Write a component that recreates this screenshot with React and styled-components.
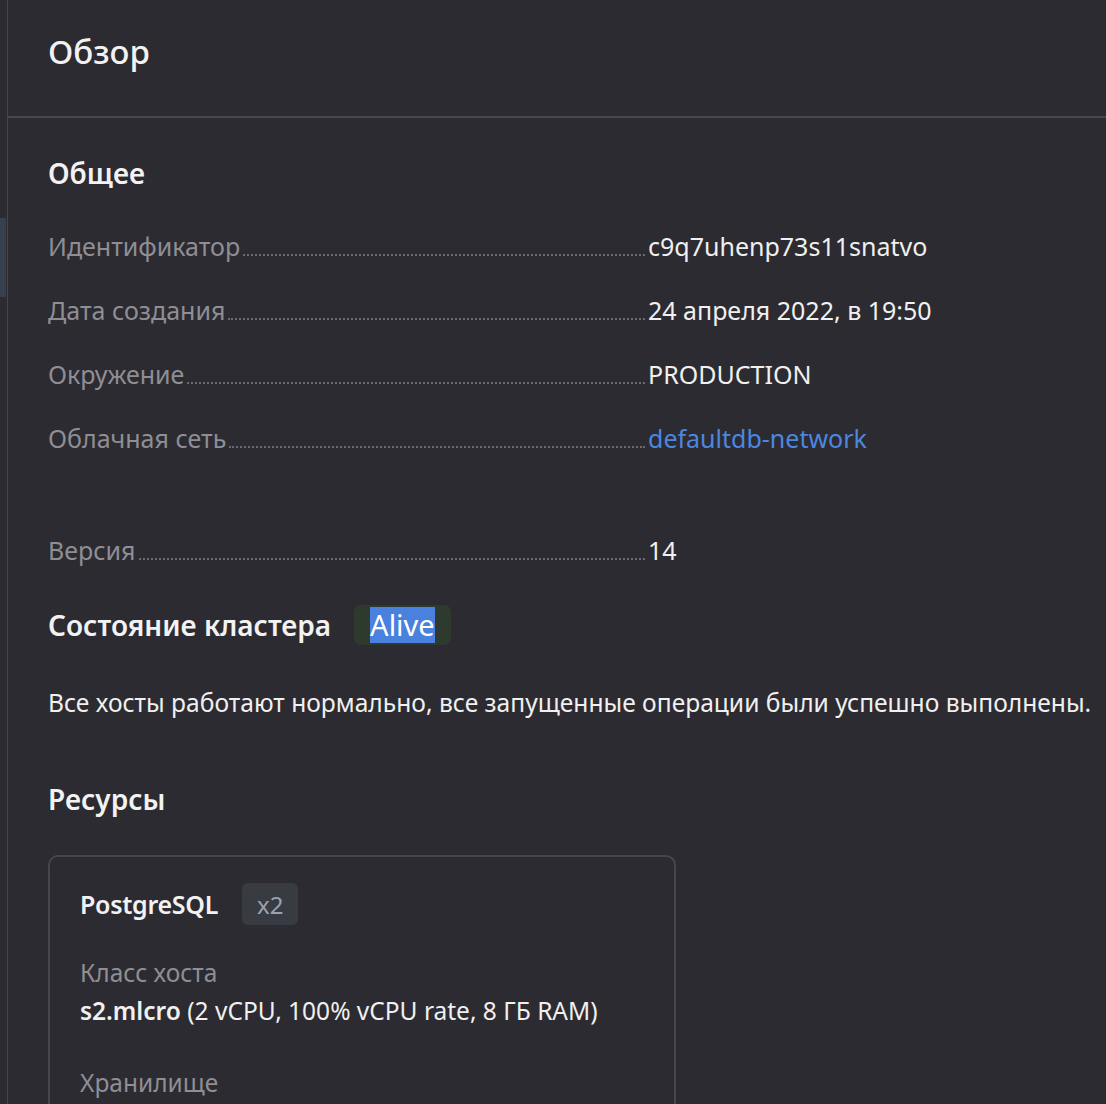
import React from 'react';
import styled, { createGlobalStyle } from 'styled-components';

const GlobalStyle = createGlobalStyle`
    body {
        margin: 0;
        background: #2c2b31;
        font-family: "Noto Sans", "Open Sans", sans-serif;
        color: #f0f0f0;
    }
`;

const Page = styled.div`
    display: flex;
    min-height: 1104px;
    background: #2c2b31;
    overflow: hidden;
`;

const Rail = styled.div`
    width: 7px;
    flex-shrink: 0;
    border-right: 1px solid #46454c;
    padding-top: 218px;
`;

const RailMark = styled.div`
    width: 6px;
    height: 79px;
    background: #38404d;
`;

const Main = styled.div`
    flex: 1;
    min-width: 0;
`;

const Header = styled.div`
    height: 118px;
    border-bottom: 2px solid #48474e;
    padding: 0 0 14px 40px;
    display: flex;
    align-items: center;
    box-sizing: border-box;
`;

const Title = styled.h1`
    margin: 0;
    font-size: 33px;
    font-weight: 500;
    color: #f2f2f2;
`;

const Content = styled.div`
    padding: 36px 0 0 40px;
`;

const SectionTitle = styled.h2`
    margin: 0;
    font-size: 28px;
    font-weight: 600;
    line-height: 38px;
    color: #f2f2f2;
`;

const Props = styled.div`
    margin-top: 37px;
    display: flex;
    flex-direction: column;
`;

const Row = styled.div`
    display: flex;
    align-items: baseline;
    height: 64px;
    line-height: 34px;
    font-size: 25px;
    margin-top: ${p => (p.$gap ? '48px' : '0')};
`;

const Key = styled.div`
    width: 597px;
    display: flex;
    align-items: baseline;
    color: #8f8e94;
`;

const Leader = styled.span`
    flex: 1;
    margin-left: 3px;
    border-bottom: 2px dotted #6c6b71;
`;

const Value = styled.div`
    padding-left: 3px;
    color: ${p => (p.$link ? '#4b87e0' : '#f0f0f0')};
`;

const StateLine = styled.div`
    display: flex;
    align-items: center;
    gap: 23px;
    margin-top: 8px;
`;

const StateBadge = styled.div`
    background: #2f3a2f;
    border-radius: 7px;
    padding: 0 16px;
    height: 40px;
    display: flex;
    align-items: center;
    font-size: 29px;
`;

const Selected = styled.span`
    background: #4a80de;
    color: #ffffff;
    line-height: 36px;
`;

const Paragraph = styled.p`
    margin: 41px 0 0;
    font-size: 24.6px;
    line-height: 34px;
    color: #f0f0f0;
    white-space: nowrap;
`;

const ResTitle = styled(SectionTitle)`
    margin-top: 60px;
`;

const Card = styled.div`
    margin-top: 37px;
    width: 628px;
    height: 300px;
    border: 2px solid #47464d;
    border-radius: 10px;
    box-sizing: border-box;
    padding: 26px 30px;
`;

const CardHead = styled.div`
    display: flex;
    align-items: center;
    gap: 24px;
`;

const CardName = styled.div`
    font-size: 25px;
    font-weight: 600;
    color: #f2f2f2;
    letter-spacing: -0.3px;
`;

const Count = styled.div`
    background: #393b43;
    border-radius: 6px;
    height: 42px;
    padding: 0 15px;
    display: flex;
    align-items: center;
    font-size: 24px;
    color: #9aa2b2;
`;

const Field = styled.div`
    margin-top: ${p => p.$top || '30px'};
`;

const FieldLabel = styled.div`
    font-size: 24.5px;
    line-height: 36px;
    color: #8f8e94;
`;

const FieldValue = styled.div`
    font-size: 24.5px;
    line-height: 40px;
    color: #f0f0f0;

    b {
        font-weight: 600;
    }
`;

const rows = [
    { key: 'Идентификатор', value: 'c9q7uhenp73s11snatvo' },
    { key: 'Дата создания', value: '24 апреля 2022, в 19:50' },
    { key: 'Окружение', value: 'PRODUCTION' },
    { key: 'Облачная сеть', value: 'defaultdb-network', link: true },
];

function App() {
    return (
        <>
            <GlobalStyle />
            <Page>
                <Rail>
                    <RailMark />
                </Rail>
                <Main>
                    <Header>
                        <Title>Обзор</Title>
                    </Header>
                    <Content>
                        <SectionTitle>Общее</SectionTitle>
                        <Props>
                            {rows.map(r => (
                                <Row key={r.key}>
                                    <Key>
                                        {r.key}
                                        <Leader />
                                    </Key>
                                    <Value $link={r.link}>{r.value}</Value>
                                </Row>
                            ))}
                            <Row $gap>
                                <Key>
                                    Версия
                                    <Leader />
                                </Key>
                                <Value>14</Value>
                            </Row>
                        </Props>
                        <StateLine>
                            <SectionTitle>Состояние кластера</SectionTitle>
                            <StateBadge>
                                <Selected>Alive</Selected>
                            </StateBadge>
                        </StateLine>
                        <Paragraph>
                            Все хосты работают нормально, все запущенные операции были успешно выполнены.
                        </Paragraph>
                        <ResTitle>Ресурсы</ResTitle>
                        <Card>
                            <CardHead>
                                <CardName>PostgreSQL</CardName>
                                <Count>x2</Count>
                            </CardHead>
                            <Field $top="30px">
                                <FieldLabel>Класс хоста</FieldLabel>
                                <FieldValue>
                                    <b>s2.mlcro</b> (2 vCPU, 100% vCPU rate, 8 ГБ RAM)
                                </FieldValue>
                            </Field>
                            <Field $top="34px">
                                <FieldLabel>Хранилище</FieldLabel>
                            </Field>
                        </Card>
                    </Content>
                </Main>
            </Page>
        </>
    );
}

export default App;
